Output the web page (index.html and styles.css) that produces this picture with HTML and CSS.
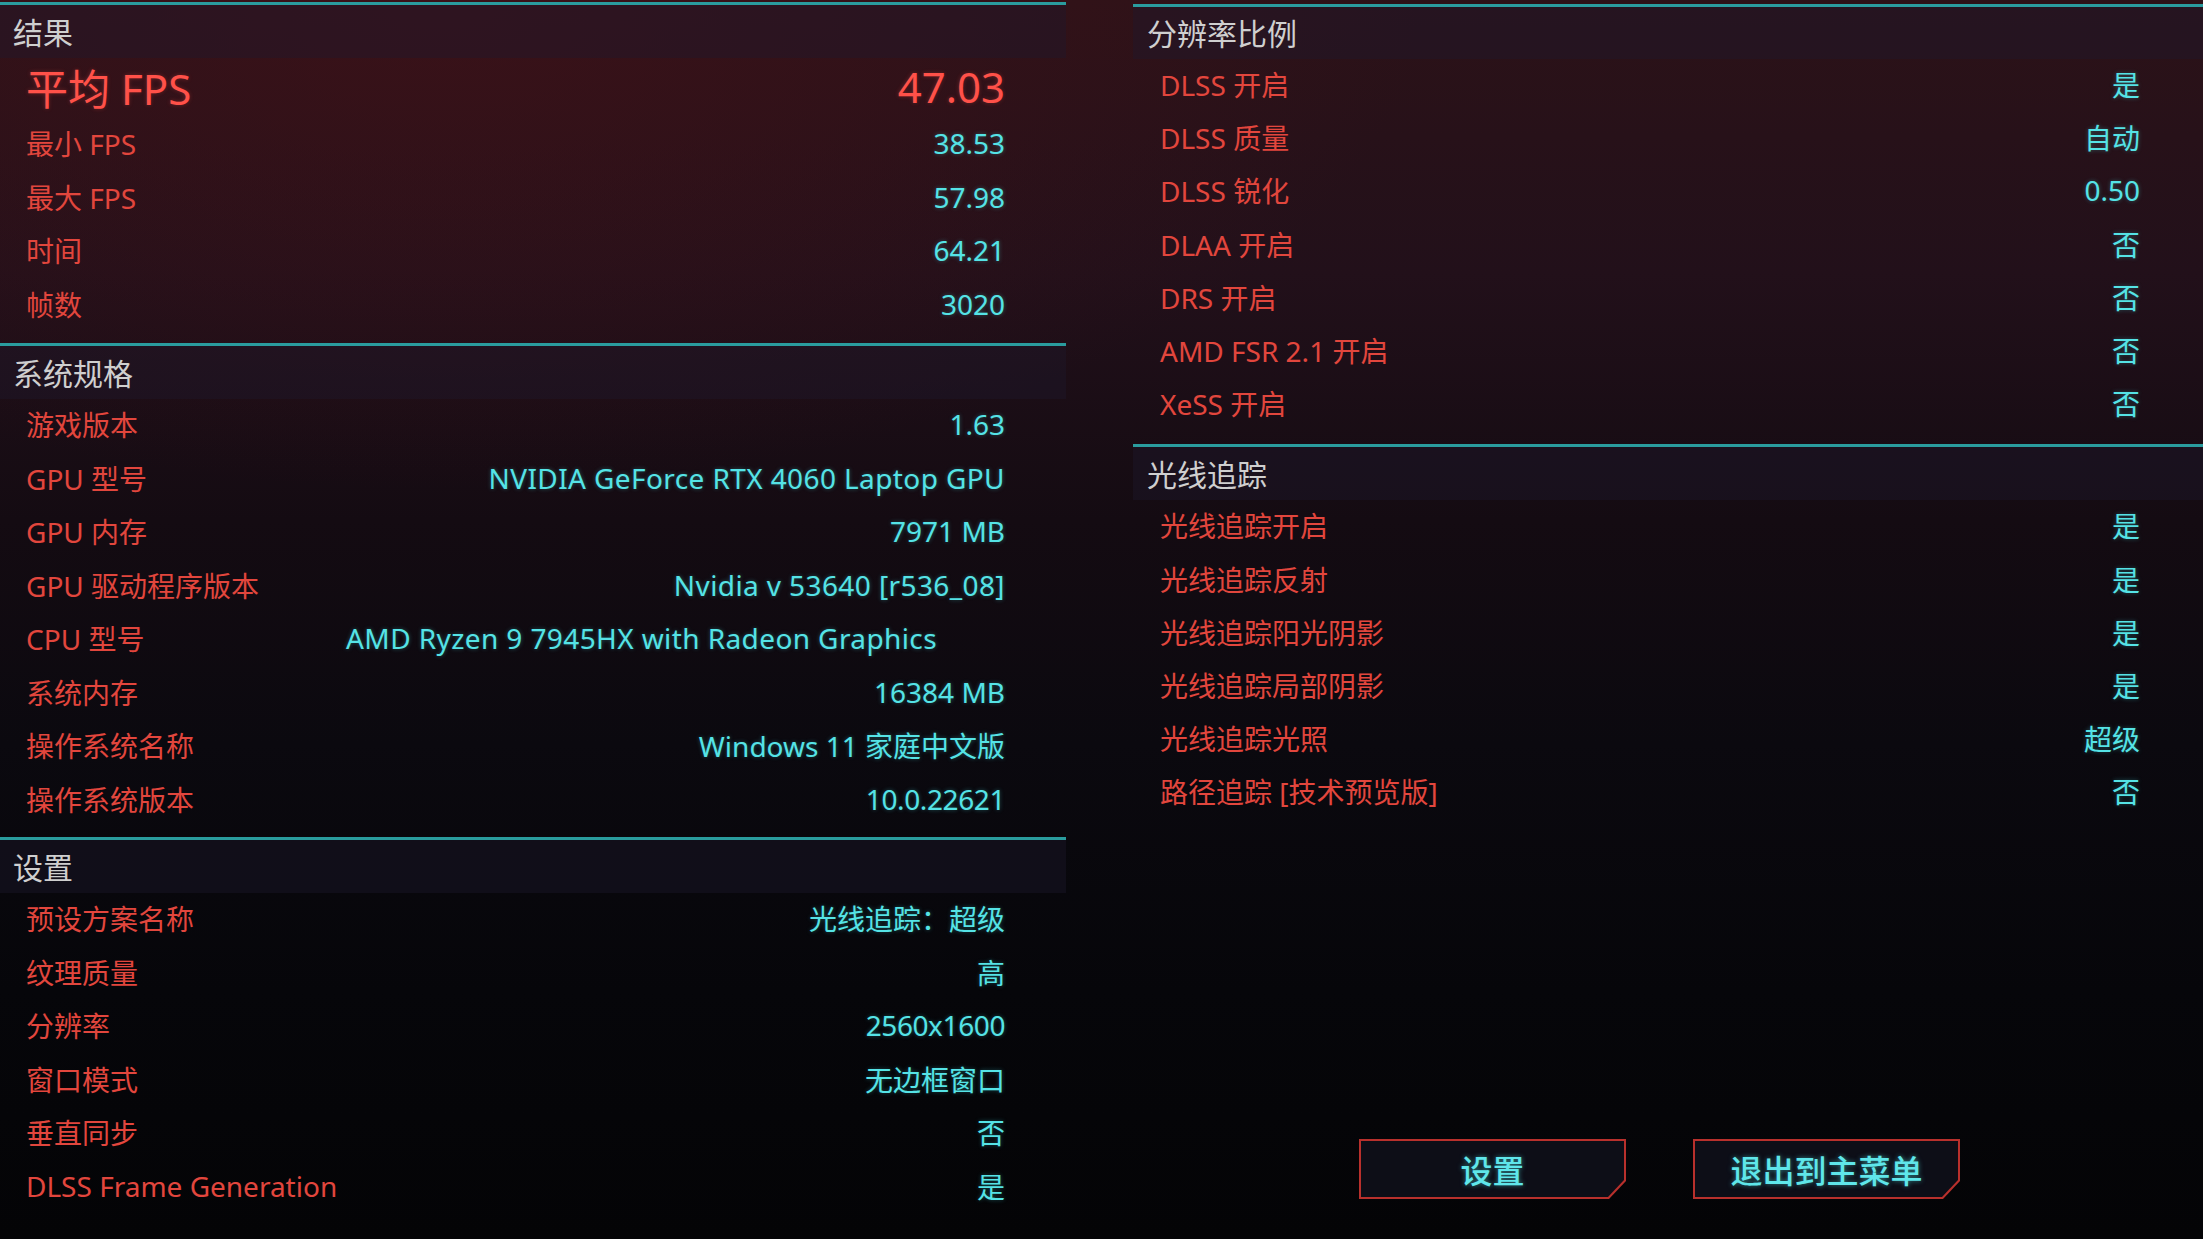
FILE: index.html
```html
<!DOCTYPE html>
<html lang="zh-CN">
<head>
<meta charset="utf-8">
<title>基准测试结果</title>
<link rel="stylesheet" href="styles.css">
</head>
<body>
<div class="screen">
  <div class="col col-left">
    <section class="sec sec-results">
      <h2 class="sec-head">结果</h2>
      <div class="row row-big"><span class="lbl">平均 FPS</span><span class="val">47.03</span></div>
      <div class="row"><span class="lbl">最小 FPS</span><span class="val">38.53</span></div>
      <div class="row"><span class="lbl">最大 FPS</span><span class="val">57.98</span></div>
      <div class="row"><span class="lbl">时间</span><span class="val">64.21</span></div>
      <div class="row"><span class="lbl">帧数</span><span class="val">3020</span></div>
    </section>
    <section class="sec">
      <h2 class="sec-head">系统规格</h2>
      <div class="row"><span class="lbl">游戏版本</span><span class="val">1.63</span></div>
      <div class="row"><span class="lbl">GPU 型号</span><span class="val val-wide">NVIDIA GeForce RTX 4060 Laptop GPU</span></div>
      <div class="row"><span class="lbl">GPU 内存</span><span class="val">7971 MB</span></div>
      <div class="row"><span class="lbl">GPU 驱动程序版本</span><span class="val val-wide">Nvidia v 53640 [r536_08]</span></div>
      <div class="row"><span class="lbl">CPU 型号</span><span class="val val-wide val-offset">AMD Ryzen 9 7945HX with Radeon Graphics</span></div>
      <div class="row"><span class="lbl">系统内存</span><span class="val">16384 MB</span></div>
      <div class="row"><span class="lbl">操作系统名称</span><span class="val">Windows 11 家庭中文版</span></div>
      <div class="row"><span class="lbl">操作系统版本</span><span class="val val-narrow">10.0.22621</span></div>
    </section>
    <section class="sec">
      <h2 class="sec-head">设置</h2>
      <div class="row"><span class="lbl">预设方案名称</span><span class="val">光线追踪：超级</span></div>
      <div class="row"><span class="lbl">纹理质量</span><span class="val">高</span></div>
      <div class="row"><span class="lbl">分辨率</span><span class="val val-narrow">2560x1600</span></div>
      <div class="row"><span class="lbl">窗口模式</span><span class="val">无边框窗口</span></div>
      <div class="row"><span class="lbl">垂直同步</span><span class="val">否</span></div>
      <div class="row"><span class="lbl">DLSS Frame Generation</span><span class="val">是</span></div>
    </section>
  </div>
  <div class="col col-right">
    <section class="sec sec-scale">
      <h2 class="sec-head">分辨率比例</h2>
      <div class="row"><span class="lbl">DLSS 开启</span><span class="val">是</span></div>
      <div class="row"><span class="lbl">DLSS 质量</span><span class="val">自动</span></div>
      <div class="row"><span class="lbl">DLSS 锐化</span><span class="val">0.50</span></div>
      <div class="row"><span class="lbl">DLAA 开启</span><span class="val">否</span></div>
      <div class="row"><span class="lbl">DRS 开启</span><span class="val">否</span></div>
      <div class="row"><span class="lbl">AMD FSR 2.1 开启</span><span class="val">否</span></div>
      <div class="row"><span class="lbl">XeSS 开启</span><span class="val">否</span></div>
    </section>
    <section class="sec">
      <h2 class="sec-head">光线追踪</h2>
      <div class="row"><span class="lbl">光线追踪开启</span><span class="val">是</span></div>
      <div class="row"><span class="lbl">光线追踪反射</span><span class="val">是</span></div>
      <div class="row"><span class="lbl">光线追踪阳光阴影</span><span class="val">是</span></div>
      <div class="row"><span class="lbl">光线追踪局部阴影</span><span class="val">是</span></div>
      <div class="row"><span class="lbl">光线追踪光照</span><span class="val">超级</span></div>
      <div class="row"><span class="lbl">路径追踪 [技术预览版]</span><span class="val">否</span></div>
    </section>
    <div class="actions">
      <button class="btn"><span class="btn-in">设置</span></button>
      <button class="btn"><span class="btn-in">退出到主菜单</span></button>
    </div>
  </div>
</div>
</body>
</html>
```

FILE: styles.css
```css
html, body {
  margin: 0;
  padding: 0;
  height: 100%;
}

body {
  overflow: hidden;
  font-family: "Noto Sans", "Noto Sans CJK SC", sans-serif;
  background:
    radial-gradient(ellipse 1400px 700px at 20% 0%, rgba(70, 18, 24, 0.55), rgba(70, 18, 24, 0) 70%),
    linear-gradient(180deg, #2c1218 0%, #22101a 22%, #140b12 42%, #0b090f 60%, #06060a 80%, #040406 100%);
}

.screen {
  display: grid;
  grid-template-columns: 1066px 1fr;
  column-gap: 67px;
  height: 1239px;
}

.col {
  display: flex;
  flex-direction: column;
}

.col-left {
  padding-top: 2px;
}

.col-right {
  padding-top: 4px;
}

.sec {
  border-top: 3px solid #2a9c9e;
  padding-bottom: 10px;
}

.sec-results {
  padding-bottom: 11px;
}

.sec-scale {
  padding-bottom: 13px;
}

.sec-head {
  margin: 0;
  height: 53px;
  display: flex;
  align-items: center;
  padding: 0 0 2px 13px;
  box-sizing: border-box;
  font-size: 30px;
  font-weight: 400;
  color: #cfcfcf;
  background: rgba(30, 25, 45, 0.4);
}

.col-right .sec-head {
  height: 52px;
  padding-left: 14px;
}

.col-right .sec + .sec .sec-head {
  height: 53px;
}

.row {
  height: 53.5px;
  box-sizing: border-box;
  display: flex;
  align-items: center;
  justify-content: space-between;
  padding: 0 61px 3px 26px;
  font-size: 28px;
  white-space: nowrap;
}

.col-right .row {
  height: 53.2px;
  padding: 0 63px 3px 27px;
}

.lbl {
  color: #e2463d;
}

.val {
  color: #55e3e6;
  text-shadow: 0 0 4px rgba(70, 220, 225, 0.35);
}

.val-wide {
  letter-spacing: 0.4px;
}

.val-narrow {
  letter-spacing: -0.4px;
}

.val-offset {
  margin-right: 68px;
}

.row-big {
  height: 60px;
  font-size: 42px;
  padding-left: 26px;
}

.row-big .lbl,
.row-big .val {
  color: #ff5149;
  text-shadow: 0 0 4px rgba(255, 80, 70, 0.3);
}

.actions {
  margin-top: auto;
  display: flex;
  gap: 67px;
  padding: 0 0 40px 226px;
}

.btn {
  width: 267px;
  height: 60px;
  padding: 2px;
  border: 0;
  margin: 0;
  background: #b8302c;
  clip-path: polygon(0 0, 100% 0, 100% calc(100% - 18px), calc(100% - 17px) 100%, 0 100%);
  cursor: pointer;
  font-family: inherit;
}

.btn-in {
  display: flex;
  align-items: center;
  justify-content: center;
  width: 100%;
  height: 100%;
  background: #0d0e17;
  clip-path: polygon(0 0, 100% 0, 100% calc(100% - 17px), calc(100% - 16px) 100%, 0 100%);
  color: #5fe6ea;
  font-size: 32px;
  font-weight: 500;
  text-shadow: 0 0 5px rgba(80, 230, 235, 0.55);
}
```
